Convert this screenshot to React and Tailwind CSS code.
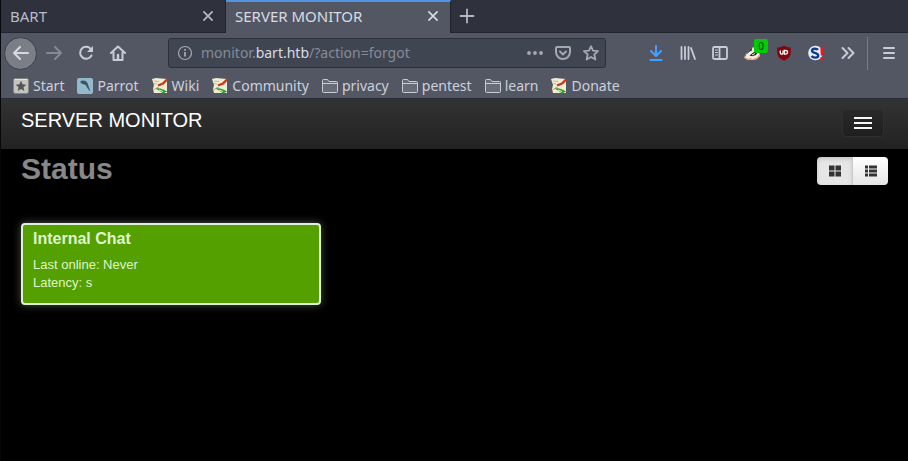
const ICON = 'h-4 w-4 shrink-0';

function Stroke({ children, className = ICON, width = 2 }) {
  return (
    <svg viewBox="0 0 16 16" className={className} fill="none" stroke="currentColor" strokeWidth={width} strokeLinecap="round" strokeLinejoin="round" aria-hidden="true">
      {children}
    </svg>
  );
}

function ToolButton({ label, children, color = 'text-[#c9ccd8]', className = '' }) {
  return (
    <button type="button" aria-label={label} className={`flex h-8 w-8 shrink-0 items-center justify-center ${color} ${className}`}>
      {children}
    </button>
  );
}

function Tab({ title, active }) {
  return (
    <div
      className={`flex w-[225px] shrink-0 items-center justify-between border-r border-[#23252e] pr-[11px] pl-[9px] ${
        active ? 'border-t-2 border-t-[#5294e2] bg-[#535764] pb-[3px] text-[#d8dbe4]' : 'border-b bg-[#2f323d] text-[#b9bcc7]'
      }`}
    >
      <button type="button" className="text-[15px] leading-5">{title}</button>
      <button type="button" aria-label={`Close ${title}`} className="flex h-3 w-3 items-center justify-center">
        <Stroke className="h-3 w-3" width={2.2}>
          <path d="M2.500 2.500l11 11M13.500 2.500l-11 11" />
        </Stroke>
      </button>
    </div>
  );
}

function TabStrip() {
  return (
    <div className="flex h-[33px] bg-[#2f323d]">
      <Tab title="BART" />
      <Tab title="SERVER MONITOR" active />
      <div className="flex flex-1 items-center border-b border-[#23252e]">
        <ToolButton label="New tab" color="text-[#b3b6c1]">
          <Stroke width={1.8}>
            <path d="M8 1.500v13M1.500 8h13" />
          </Stroke>
        </ToolButton>
      </div>
    </div>
  );
}

function Badger() {
  return (
    <svg viewBox="0 0 18 16" className="h-4 w-[18px]" aria-hidden="true">
      <path d="M1.500 11L6 5.500l4-3.500 6 5 1 4-4 3.500-8 .5-3.500-2z" fill="#f3eee3" />
      <path d="M1 12l5-6.500L9.500 2 8.500 6 5 9.500z" fill="#3a2f28" />
      <path d="M6.500 10.500L11 7l4 .5-2.500 2.800-3.500 1z" fill="#25211e" />
      <path d="M3 10.500l5-4" stroke="#fff" strokeWidth="1.200" />
      <path d="M1.500 12.500l4 2 3-.8M10.500 14.300l4-1.300 2-2.500" stroke="#d99b6a" strokeWidth="1.300" fill="none" />
      <path d="M9 10l3-1.500" stroke="#f3eee3" />
    </svg>
  );
}

function Shield() {
  return (
    <svg viewBox="0 0 16 16" className={ICON} aria-hidden="true">
      <path d="M8 .5C6 2 3.500 2.500 1.200 2.500v5C1.200 11.500 4 14 8 15.700c4-1.700 6.800-4.200 6.800-8.200v-5C12.500 2.500 10 2 8 .5z" fill="#800610" />
      <path d="M4.300 5.500v2.200a1.400 1.400 0 0 0 2.800 0V5.500" stroke="#fff" strokeWidth="1.300" fill="none" />
      <path d="M8.300 5.500h1.500a1.800 1.800 0 0 1 0 3.600H8.300z" stroke="#fff" strokeWidth="1.300" fill="none" />
    </svg>
  );
}

function ScriptGuard() {
  return (
    <svg viewBox="0 0 16 16" className={ICON} aria-hidden="true">
      <circle cx="7.500" cy="8" r="7.300" fill="#e9eef6" />
      <path d="M10 4.900C8.800 3.200 4 3.200 4 5.700c0 2.700 6.200 1.700 6.200 4.700 0 2.800-5 2.800-6.700.7" fill="none" stroke="#0b3d91" strokeWidth="2.400" />
      <path d="M12.300 1.800h3.200l-.5 8.700h-2.200zM12.400 12.300h2.900v3h-2.900z" fill="#ee1620" />
    </svg>
  );
}

function UrlBar() {
  return (
    <div className="mr-[34px] ml-[34px] flex h-[30px] flex-1 items-center rounded-[3px] border border-[#2d303b] bg-[#404552] pr-1.5 pl-2 text-[#a4a8b3]">
      <svg viewBox="0 0 16 16" className={ICON} fill="none" stroke="currentColor" aria-hidden="true">
        <circle cx="8" cy="8" r="6.500" strokeWidth="1.200" />
        <path d="M8 7v4.500M8 4v1.800" strokeWidth="1.800" />
      </svg>
      <a href="#status" className="ml-2 flex-1 text-[14px] leading-5 text-[#868b98]">
        monitor.<span className="text-[#d8dce5]">bart.htb</span>/?action=forgot
      </a>
      <div className="flex gap-3">
        <button type="button" aria-label="Page actions">
          <svg viewBox="0 0 16 16" className={ICON} fill="currentColor" aria-hidden="true">
            <circle cx="2" cy="8" r="1.900" />
            <circle cx="8" cy="8" r="1.900" />
            <circle cx="14" cy="8" r="1.900" />
          </svg>
        </button>
        <button type="button" aria-label="Save to Pocket">
          <Stroke>
            <path d="M2 2h12a1 1 0 0 1 1 1v4a7 7 0 0 1-14 0V3a1 1 0 0 1 1-1zM5 6.500l3 3 3-3" />
          </Stroke>
        </button>
        <button type="button" aria-label="Bookmark this page">
          <Stroke width={1.8}>
            <path d="M8 1.200l2 4.500 5 .5-3.700 3.300 1.100 5L8 12l-4.400 2.500 1.100-5L1 6.200l5-.5z" />
          </Stroke>
        </button>
      </div>
    </div>
  );
}

function Toolbar() {
  return (
    <div className="flex h-10 items-center pr-[3px] pl-[3px]">
      <button type="button" aria-label="Back" className="mr-px flex h-[33px] w-[33px] shrink-0 items-center justify-center rounded-full border border-[#3b3e49] bg-[#7b7e86] text-[#d5d8e0]">
        <Stroke>
          <path d="M1 8h14M7 2L1 8l6 6" />
        </Stroke>
      </button>
      <ToolButton label="Forward" color="text-[#858995]">
        <Stroke>
          <path d="M1 8h14M9 2l6 6-6 6" />
        </Stroke>
      </ToolButton>
      <ToolButton label="Reload">
        <Stroke>
          <path d="M13.500 10.500A6 6 0 1 1 13 4.300" />
          <path d="M15 1v6H9z" fill="currentColor" stroke="none" />
        </Stroke>
      </ToolButton>
      <ToolButton label="Home">
        <Stroke>
          <path d="M1 8l7-6.500L15 8M3.500 7.500V15h9V7.500" />
          <path d="M8 14v-4" strokeWidth="2.500" />
        </Stroke>
      </ToolButton>
      <UrlBar />
      <ToolButton label="Downloads" color="text-[#45a1ff]">
        <Stroke>
          <path d="M8 1v9.500M3 6l5 5 5-5M2.500 15h11" />
        </Stroke>
      </ToolButton>
      <ToolButton label="Library">
        <Stroke width={1.8}>
          <path d="M1.500 2v12M5 2v12M8.500 2v12M11 3l4 11" />
        </Stroke>
      </ToolButton>
      <ToolButton label="Sidebars">
        <Stroke width={1.8}>
          <rect x="1" y="2" width="14" height="12" rx="1.500" />
          <path d="M7.500 2v12" />
          <path d="M3.500 5h2M3.500 7.500h2M3.500 10h2" strokeWidth="1" />
        </Stroke>
      </ToolButton>
      <ToolButton label="Privacy Badger, 0 trackers" className="relative">
        <Badger />
        <span className="absolute top-0.5 right-0 flex h-[14px] w-[14px] items-center justify-center rounded-[2px] bg-[#00cc00] text-[10px] leading-3 text-[#0c2c0c]">0</span>
      </ToolButton>
      <ToolButton label="uBlock Origin">
        <Shield />
      </ToolButton>
      <ToolButton label="NoScript">
        <ScriptGuard />
      </ToolButton>
      <ToolButton label="More tools">
        <Stroke>
          <path d="M2.500 3l5 5-5 5M8.500 3l5 5-5 5" />
        </Stroke>
      </ToolButton>
      <div className="mr-[5px] ml-[3px] h-[33px] w-px bg-[#777b87]" />
      <ToolButton label="Open menu">
        <Stroke>
          <path d="M3 3h10M3 8h10M3 13h10" />
        </Stroke>
      </ToolButton>
    </div>
  );
}

function StartIcon() {
  return (
    <svg viewBox="0 0 16 16" className={ICON} aria-hidden="true">
      <rect x=".5" y=".5" width="15" height="15" rx="2" fill="#c4c4c1" stroke="#83837f" />
      <path d="M1.500 1.500h13" stroke="#e6e6e2" />
      <path d="M8 2.800l1.600 3.500 3.700.4-2.800 2.600.8 3.700L8 11.100 4.700 13l.8-3.700-2.800-2.600 3.700-.4z" fill="#555554" />
    </svg>
  );
}

function ParrotIcon() {
  return (
    <svg viewBox="0 0 16 16" className={ICON} aria-hidden="true">
      <rect width="16" height="16" rx="2" fill="#92b9cc" />
      <path d="M3 3.500C5.500 1.800 9 2 10.500 5c1 2.500 1.500 5 3 8.500-2.500-2-3.500-4-4.500-6C7.500 6 6 6.500 4.500 5.500z" fill="#3b5666" />
    </svg>
  );
}

function NoteIcon() {
  return (
    <svg viewBox="0 0 16 16" className={ICON} aria-hidden="true">
      <path d="M0 1l4-1 11 1v14H2l-1-4 1-4z" fill="#f2ecd5" />
      <path d="M2 3l5 .5M2 5.500l3 .5" stroke="#c2b896" />
      <path d="M15.500 1L11 5.500 6 7.500" stroke="#c63a1b" strokeWidth="2.400" fill="none" />
      <path d="M1 12.500L5 9.500l2 .5" stroke="#dd9c75" fill="none" />
      <path d="M3.500 10.500c4-1 8 .5 11.500 3l-4 2c-2-2-4.500-3-7.500-5z" fill="#2c9b32" />
      <path d="M7 12l4 1.500" stroke="#e3f3d2" />
    </svg>
  );
}

function FolderIcon() {
  return (
    <svg viewBox="0 0 16 16" className={ICON} fill="#686c77" stroke="#c9ccd5" aria-hidden="true">
      <path d="M.5 13.500v-11a1 1 0 0 1 1-1h4l1.500 2h7.500a1 1 0 0 1 1 1v9a1 1 0 0 1-1 1h-13a1 1 0 0 1-1-1zM.5 5.500h15" />
    </svg>
  );
}

const bookmarks = [
  ['Start', StartIcon],
  ['Parrot', ParrotIcon],
  ['Wiki', NoteIcon],
  ['Community', NoteIcon],
  ['privacy', FolderIcon],
  ['pentest', FolderIcon],
  ['learn', FolderIcon],
  ['Donate', NoteIcon],
];

function Bookmarks() {
  return (
    <nav aria-label="Bookmarks" className="flex h-[26px] items-center gap-[13px] border-b border-[#2a2a35] pl-3 text-[14px] leading-5 text-[#cdd0da]">
      {bookmarks.map(([name, Icon]) => (
        <a key={name} href="#status" className="flex shrink-0 items-center gap-1">
          <Icon />
          {name}
        </a>
      ))}
    </nav>
  );
}

function ModeButton({ label, pressed, children }) {
  return (
    <button
      type="button"
      aria-label={label}
      aria-pressed={pressed}
      className={`flex h-7 items-center justify-center text-[#333333] ${
        pressed
          ? 'w-9 rounded-l-[4px] border-r border-[#c9c9c9] bg-[#e6e6e6] shadow-[inset_0_2px_4px_rgba(0,0,0,0.15)]'
          : 'w-[35px] rounded-r-[4px] bg-linear-to-b from-white to-[#e6e6e6]'
      }`}
    >
      <svg viewBox="0 0 12 12" className="h-3 w-3" fill="currentColor" aria-hidden="true">
        {children}
      </svg>
    </button>
  );
}

function SiteHeader() {
  return (
    <header className="flex h-[50px] items-start justify-between bg-linear-to-b from-[#333333] to-[#222222] pr-6 pl-5">
      <a href="#status" className="mt-[11px] text-[20px] leading-5 text-white">SERVER MONITOR</a>
      <button type="button" aria-label="Toggle navigation" className="mt-[10px] flex h-7 w-[42px] flex-col items-center justify-center gap-[3px] rounded-[4px] border border-[#2f2f2f] bg-linear-to-b from-[#292929] to-[#1f1f1f]">
        <span className="h-0.5 w-[18px] bg-[#f5f5f5]" />
        <span className="h-0.5 w-[18px] bg-[#f5f5f5]" />
        <span className="h-0.5 w-[18px] bg-[#f5f5f5]" />
      </button>
    </header>
  );
}

export default function App() {
  return (
    <div className="min-h-screen border-l border-[#06070b] bg-black">
      <div className="bg-[#535764] font-['Noto_Sans',sans-serif]">
        <TabStrip />
        <Toolbar />
        <Bookmarks />
      </div>
      <div className="font-['Liberation_Sans',Arial,sans-serif]">
        <SiteHeader />
        <main id="status" className="px-5">
          <div className="flex items-start justify-between">
            <h1 className="text-[30px] leading-10 font-bold text-[#888888]">Status</h1>
            <div className="mt-2 flex">
              <ModeButton label="Block view" pressed>
                <path d="M0 .5h5.500v5H0zM6.500 .5H12v5H6.500zM0 6.500h5.500v5H0zM6.500 6.500H12v5H6.500z" />
              </ModeButton>
              <ModeButton label="List view" pressed={false}>
                <path d="M0 .5h3v3H0zM4 .5h8v3H4zM0 4.500h3v3H0zM4 4.500h8v3H4zM0 8.500h3v3H0zM4 8.500h8v3H4z" />
              </ModeButton>
            </div>
          </div>
          <section className="mt-[34px] h-[82px] w-[300px] max-w-full rounded-[4px] border-2 border-[#dff0d8] bg-[#53a000] px-[10px] pt-1 text-[#dff5cf] shadow-[0_0_8px_rgba(223,240,216,0.35)]">
            <h2 className="text-[16px] leading-5 font-bold">Internal Chat</h2>
            <p className="mt-[7px] text-[13px] leading-[18px]">
              Last online: Never
              <br />
              Latency: s
            </p>
          </section>
        </main>
      </div>
    </div>
  );
}
